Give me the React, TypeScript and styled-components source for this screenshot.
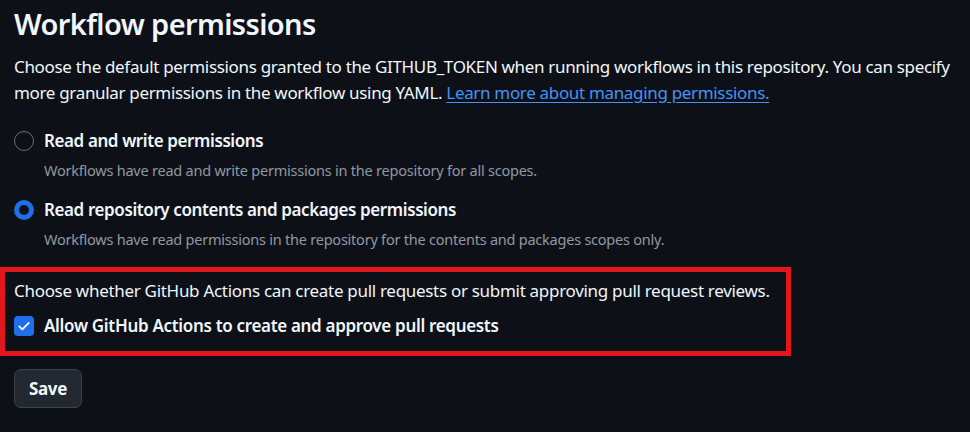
import React from "react";
import styled, { createGlobalStyle } from "styled-components";

const Global = createGlobalStyle`
  html, body { margin: 0; padding: 0; background: #0d1117; }
  body { font-family: "Noto Sans", "Open Sans", sans-serif; color: #f0f6fc; }
`;

const Page = styled.div`
  width: 970px;
  height: 432px;
  overflow: hidden;
  background: #0d1117;
  padding: 0 0 0 14px;
  box-sizing: border-box;
`;

const Title = styled.h2`
  margin: 0;
  padding-top: 5px;
  height: 49px;
  font-size: 29px;
  line-height: 37px;
  font-weight: 600;
  letter-spacing: -0.6px;
  color: #f0f6fc;
`;

const Lead = styled.p`
  margin: 0;
  font-size: 17px;
  line-height: 26px;
  letter-spacing: -0.33px;
  color: #f0f6fc;
  width: 952px;
`;

const Link = styled.a`
  color: #4493f8;
  text-decoration: underline;
  text-underline-offset: 3px;
`;

const Options = styled.div`
  display: flex;
  flex-direction: column;
  gap: 16px;
  margin-top: 22px;
`;

const Option = styled.label`
  display: grid;
  grid-template-columns: 20px 1fr;
  column-gap: 10px;
  row-gap: 5px;
  align-items: center;
`;

const Radio = styled.span<{ $checked?: boolean }>`
  width: 20px;
  height: 20px;
  box-sizing: border-box;
  border-radius: 50%;
  border: ${(p) => (p.$checked ? "5px solid #1f6feb" : "1px solid #6b7079")};
  background: transparent;
`;

const OptionTitle = styled.span`
  font-size: 17px;
  line-height: 26px;
  font-weight: 600;
  letter-spacing: -0.4px;
  color: #f0f6fc;
`;

const OptionDesc = styled.span`
  grid-column: 2;
  font-size: 14.5px;
  line-height: 22px;
  letter-spacing: -0.23px;
  color: #9198a1;
`;

const Highlight = styled.div`
  margin: 17px 0 0 -14px;
  width: 791px;
  height: 89px;
  box-sizing: border-box;
  border: 5px solid #e3151d;
  padding: 6px 0 0 9px;
  display: flex;
  flex-direction: column;
  gap: 9px;
`;

const Note = styled.p`
  margin: 0;
  font-size: 17px;
  line-height: 26px;
  letter-spacing: -0.3px;
  color: #f0f6fc;
  white-space: nowrap;
`;

const CheckRow = styled.label`
  display: flex;
  align-items: center;
  gap: 10px;
`;

const Checkbox = styled.span`
  width: 20px;
  height: 20px;
  border-radius: 4px;
  background: #1f6feb;
  display: flex;
  align-items: center;
  justify-content: center;
`;

const CheckLabel = styled.span`
  font-size: 17px;
  line-height: 26px;
  font-weight: 600;
  letter-spacing: -0.32px;
  color: #f0f6fc;
  white-space: nowrap;
`;

const SaveButton = styled.button`
  margin-top: 13px;
  width: 68px;
  height: 39px;
  box-sizing: border-box;
  border-radius: 7px;
  border: 1px solid #3d444d;
  background: #212830;
  color: #f0f6fc;
  font-family: "Noto Sans", "Open Sans", sans-serif;
  font-size: 17px;
  font-weight: 700;
  letter-spacing: -0.3px;
  padding: 0;
`;

export default function App() {
  return (
    <Page>
      <Global />
      <Title>Workflow permissions</Title>
      <Lead>
        Choose the default permissions granted to the GITHUB_TOKEN when running workflows in this
        repository. You can specify more granular permissions in the workflow using YAML.{" "}
        <Link href="#">Learn more about managing permissions.</Link>
      </Lead>
      <Options>
        <Option>
          <Radio />
          <OptionTitle>Read and write permissions</OptionTitle>
          <OptionDesc>
            Workflows have read and write permissions in the repository for all scopes.
          </OptionDesc>
        </Option>
        <Option>
          <Radio $checked />
          <OptionTitle>Read repository contents and packages permissions</OptionTitle>
          <OptionDesc>
            Workflows have read permissions in the repository for the contents and packages scopes
            only.
          </OptionDesc>
        </Option>
      </Options>
      <Highlight>
        <Note>
          Choose whether GitHub Actions can create pull requests or submit approving pull request
          reviews.
        </Note>
        <CheckRow>
          <Checkbox>
            <svg width="16" height="16" viewBox="0 0 16 16" fill="none">
              <path
                d="M3.2 8.4 6.3 11.4 12.8 4.8"
                stroke="#ffffff"
                strokeWidth="1.7"
                strokeLinecap="round"
                strokeLinejoin="round"
              />
            </svg>
          </Checkbox>
          <CheckLabel>Allow GitHub Actions to create and approve pull requests</CheckLabel>
        </CheckRow>
      </Highlight>
      <SaveButton>Save</SaveButton>
    </Page>
  );
}
